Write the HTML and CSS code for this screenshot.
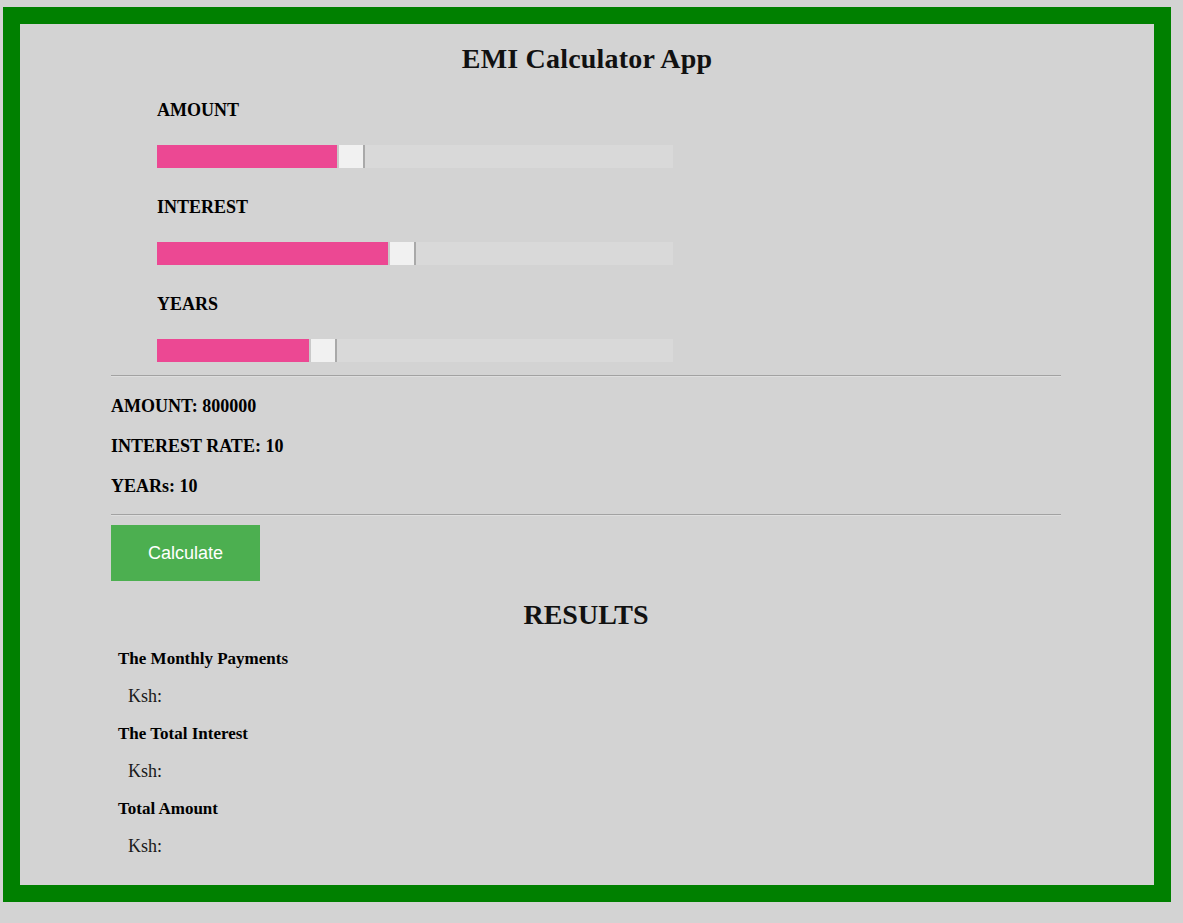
FILE: index.html
```html
<!DOCTYPE html>
<html lang="en">
<head>
<meta charset="utf-8">
<title>EMI Calculator App</title>
<link rel="stylesheet" href="styles.css">
</head>
<body>
<div class="frame">
  <h1 class="title">EMI Calculator App</h1>
  <div class="content">
    <div class="sliders">
      <div class="field">
        <div class="label">AMOUNT</div>
        <div class="slider"><div class="fill" style="width:180px"></div><div class="thumb"></div></div>
      </div>
      <div class="field">
        <div class="label">INTEREST</div>
        <div class="slider"><div class="fill" style="width:231px"></div><div class="thumb"></div></div>
      </div>
      <div class="field">
        <div class="label">YEARS</div>
        <div class="slider"><div class="fill" style="width:152px"></div><div class="thumb"></div></div>
      </div>
    </div>
    <hr class="rule rule-top">
    <div class="values">
      <div class="value">AMOUNT: 800000</div>
      <div class="value">INTEREST RATE: 10</div>
      <div class="value">YEARs: 10</div>
    </div>
    <hr class="rule rule-bottom">
    <button class="calc" type="button">Calculate</button>
    <h2 class="results-title">RESULTS</h2>
    <div class="results">
      <div class="result">
        <div class="result-head">The Monthly Payments</div>
        <div class="result-val">Ksh:</div>
      </div>
      <div class="result">
        <div class="result-head">The Total Interest</div>
        <div class="result-val">Ksh:</div>
      </div>
      <div class="result">
        <div class="result-head">Total Amount</div>
        <div class="result-val">Ksh:</div>
      </div>
    </div>
  </div>
</div>
</body>
</html>
```
FILE: styles.css
```css
html, body {
  margin: 0;
  padding: 0;
  background: #d3d3d3;
}
body {
  font-family: "Liberation Serif", "Times New Roman", serif;
  color: #111;
}
.frame {
  box-sizing: border-box;
  width: 1168px;
  margin: 7px 0 0 3px;
  border: 17px solid #008000;
  background: #d3d3d3;
  padding: 19px 0 28px 0;
}
.title {
  margin: 0;
  font-size: 28px;
  line-height: 32px;
  font-weight: bold;
  text-align: center;
  letter-spacing: 0.2px;
}
.content {
  width: 950px;
  margin-left: 91px;
}
.sliders {
  padding-left: 46px;
  padding-top: 23px;
  display: flex;
  flex-direction: column;
  gap: 27px;
}
.field {
  display: flex;
  flex-direction: column;
  gap: 24px;
}
.label {
  padding-top: 1px;
  font-size: 18px;
  line-height: 22px;
  font-weight: bold;
  color: #000;
}
.slider {
  width: 516px;
  height: 23px;
  background: #d9d9d9;
  display: flex;
}
.fill {
  height: 100%;
  background: #ec4893;
}
.thumb {
  box-sizing: border-box;
  width: 28px;
  height: 100%;
  background: #f1f1f1;
  border-left: 2px solid #c9c9c9;
  border-right: 2px solid #a9a9a9;
}
.rule {
  margin: 0;
  height: 0;
  border: 0;
  border-top: 1px solid #a2a2a2;
  border-bottom: 1px solid #dedede;
}
.rule-top {
  margin-top: 13px;
}
.values {
  padding: 18px 0 17px;
  display: flex;
  flex-direction: column;
  gap: 18px;
}
.value {
  font-size: 18px;
  line-height: 22px;
  font-weight: bold;
  color: #000;
}
.calc {
  display: block;
  margin-top: 9px;
  width: 149px;
  height: 56px;
  border: 0;
  padding: 0;
  background: #4caf50;
  color: #fff;
  font-family: "Liberation Sans", Arial, sans-serif;
  font-size: 18px;
}
.results-title {
  margin: 18px 0 0;
  font-size: 28px;
  line-height: 32px;
  font-weight: bold;
  text-align: center;
}
.results {
  margin-top: 17px;
  display: flex;
  flex-direction: column;
  gap: 16px;
}
.result {
  display: flex;
  flex-direction: column;
  gap: 16px;
}
.result-head {
  padding-top: 1px;
  padding-left: 7px;
  font-size: 17px;
  line-height: 20px;
  font-weight: bold;
  color: #000;
}
.result-val {
  padding-left: 17px;
  font-size: 18px;
  line-height: 22px;
  color: #1a1a1a;
}
```
